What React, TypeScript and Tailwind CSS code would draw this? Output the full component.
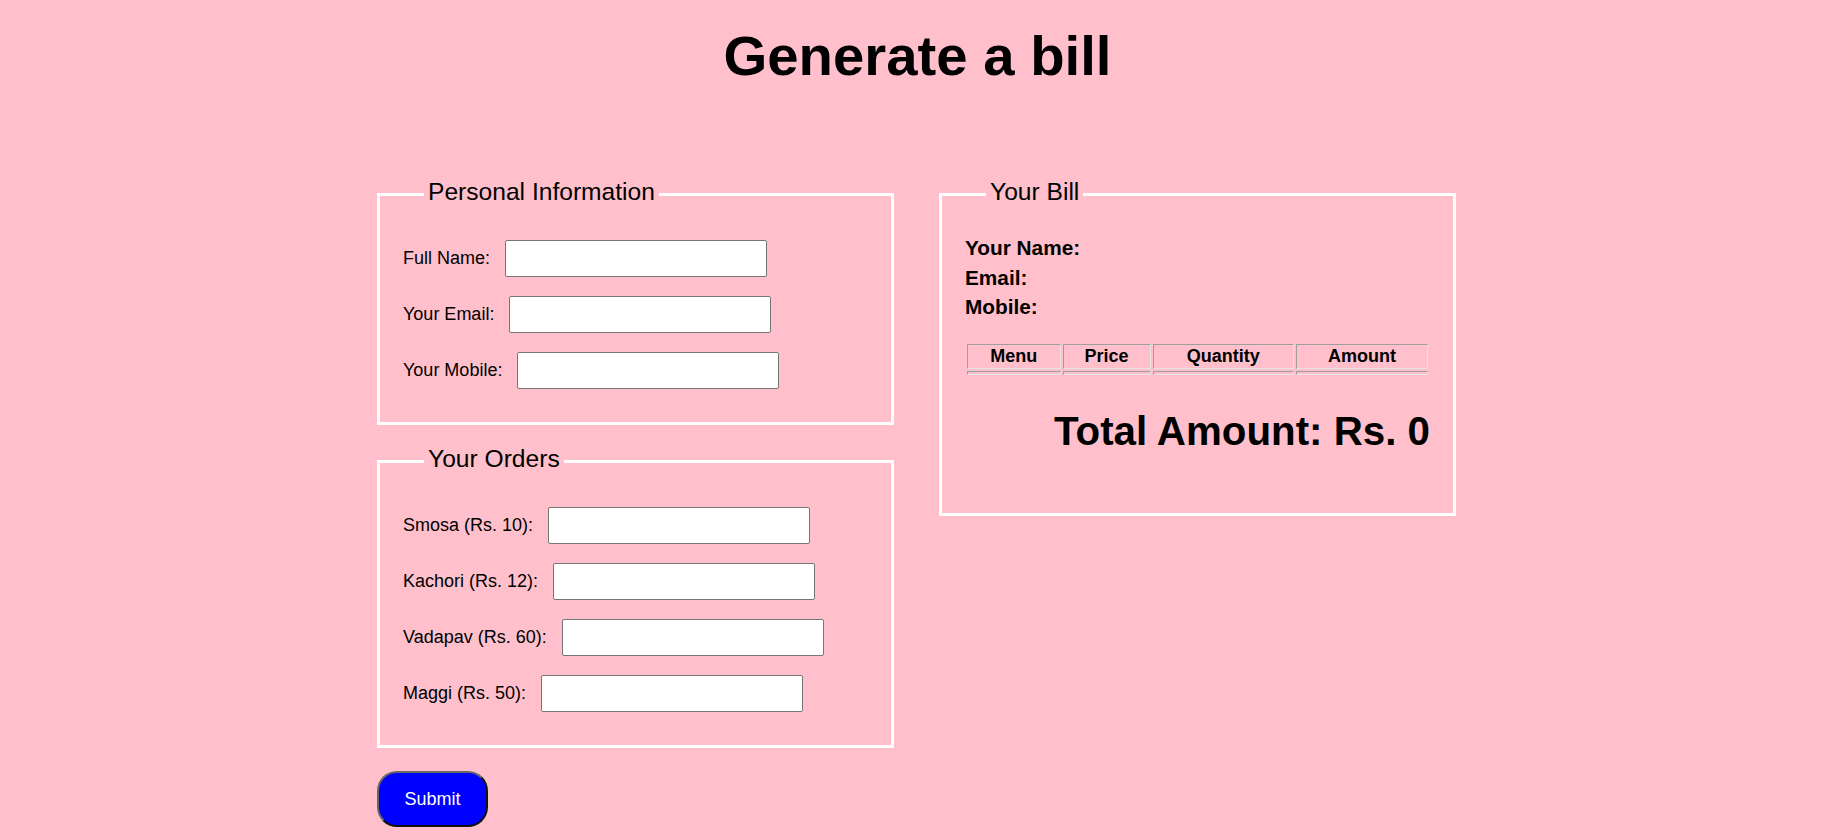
const personal = [
  { label: "Full Name:", type: "text" },
  { label: "Your Email:", type: "email" },
  { label: "Your Mobile:", type: "tel" },
];

const orders = [
  { label: "Smosa (Rs. 10):" },
  { label: "Kachori (Rs. 12):" },
  { label: "Vadapav (Rs. 60):" },
  { label: "Maggi (Rs. 50):" },
];

const columns = ["Menu", "Price", "Quantity", "Amount"];

const Row = ({ label, type = "number" }: { label: string; type?: string }) => (
  <div className="flex h-[37px] items-center gap-[15px]">
    <label className="text-[18px]">{label}</label>
    <input
      type={type}
      className="h-[37px] w-[262px] rounded-[2px] border border-[#767676] bg-white px-2 outline-none"
    />
  </div>
);

const Legend = ({ children }: { children: React.ReactNode }) => (
  <legend className="ml-[21px] px-[4px] pb-[4px] text-[24.6px] leading-[28px]">{children}</legend>
);

export default function App() {
  return (
    <div className="min-h-screen bg-[#ffc0cb] font-['Liberation_Sans',Arial,sans-serif] text-black">
      <h1 className="pt-[24px] text-center text-[56.3px] font-bold leading-[64px]">Generate a bill</h1>

      <div className="mt-[90px] flex items-start justify-center gap-[45px] pr-[2px]">
        <div className="w-[517px]">
          <fieldset className="border-[3px] border-white px-[23px] pt-[30px] pb-[33px]">
            <Legend>Personal Information</Legend>
            <div className="flex flex-col gap-[19px]">
              {personal.map((p) => (
                <Row key={p.label} label={p.label} type={p.type} />
              ))}
            </div>
          </fieldset>

          <fieldset className="mt-[20px] border-[3px] border-white px-[23px] pt-[30px] pb-[33px]">
            <Legend>Your Orders</Legend>
            <div className="flex flex-col gap-[19px]">
              {orders.map((o) => (
                <Row key={o.label} label={o.label} />
              ))}
            </div>
          </fieldset>

          <button className="mt-[23px] h-[56px] w-[111px] rounded-[20px] border-2 border-t-[#666] border-l-[#666] border-r-[#111] border-b-[#111] bg-[#0000ff] text-[18px] text-white">
            Submit
          </button>
        </div>

        <fieldset className="w-[517px] border-[3px] border-white px-[23px] pt-[23px] pb-[58px]">
          <Legend>Your Bill</Legend>
          <div className="text-[20.8px] font-bold leading-[29.5px]">
            <div>Your Name:</div>
            <div>Email:</div>
            <div>Mobile:</div>
          </div>

          <table className="mt-[20px] w-full border-separate border-spacing-[2px]">
            <thead>
              <tr>
                {columns.map((c) => (
                  <th
                    key={c}
                    className="border border-t-[#9e9e9e] border-l-[#9e9e9e] border-r-[#e4e4e4] border-b-[#e4e4e4] p-[1px] text-center text-[18px] font-bold leading-[21px]"
                  >
                    {c}
                  </th>
                ))}
              </tr>
            </thead>
            <tbody>
              <tr>
                {columns.map((c) => (
                  <td
                    key={c}
                    className="border border-t-[#9e9e9e] border-l-[#9e9e9e] border-r-[#e4e4e4] border-b-[#e4e4e4] p-[1px]"
                  ></td>
                ))}
              </tr>
            </tbody>
          </table>

          <h2 className="mt-[32px] text-right text-[40.3px] font-bold leading-[46px]">Total Amount: Rs. 0</h2>
        </fieldset>
      </div>
    </div>
  );
}
